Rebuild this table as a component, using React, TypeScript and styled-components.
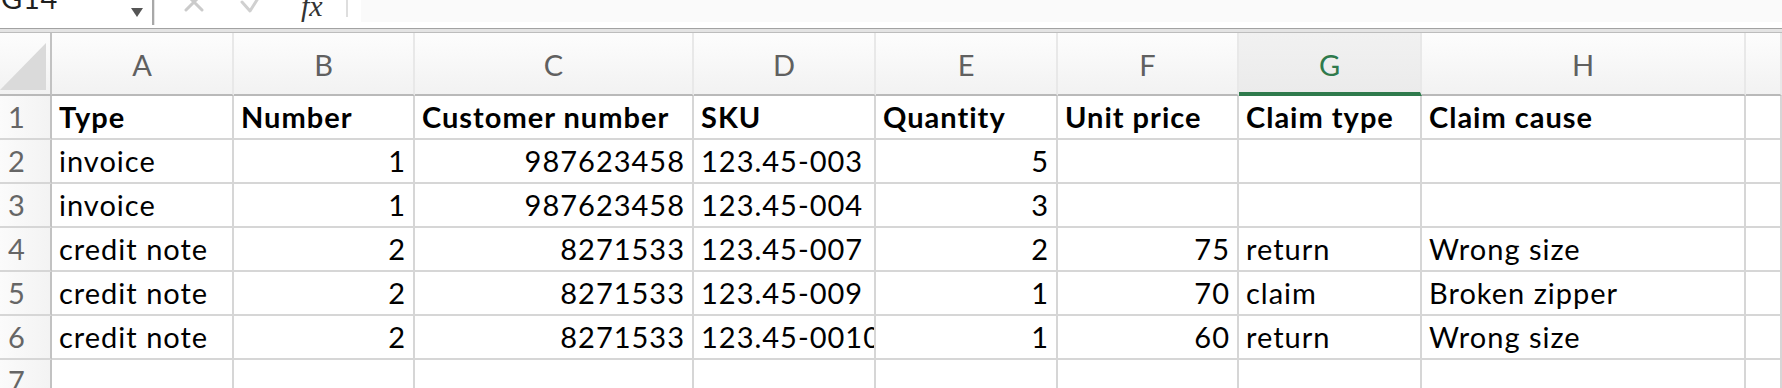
import React from 'react';
import styled, { createGlobalStyle, css } from 'styled-components';

const GlobalStyle = createGlobalStyle`
  html, body {
    margin: 0;
    padding: 0;
    background: #ffffff;
    overflow: hidden;
  }
  body {
    font-family: Lato, "Open Sans", sans-serif;
    font-size: 29px;
    color: #000;
  }
`;

type Cell = string | number | null;

const columns = [
  { key: 'A', width: 182 },
  { key: 'B', width: 181 },
  { key: 'C', width: 279 },
  { key: 'D', width: 182 },
  { key: 'E', width: 182 },
  { key: 'F', width: 181 },
  { key: 'G', width: 183 },
  { key: 'H', width: 324 },
];

const selectedColumn = 'G';

const titles = ['Type', 'Number', 'Customer number', 'SKU', 'Quantity', 'Unit price', 'Claim type', 'Claim cause'];

const rows: Cell[][] = [
  ['invoice', 1, 987623458, '123.45-003', 5, null, null, null],
  ['invoice', 1, 987623458, '123.45-004', 3, null, null, null],
  ['credit note', 2, 8271533, '123.45-007', 2, 75, 'return', 'Wrong size'],
  ['credit note', 2, 8271533, '123.45-009', 1, 70, 'claim', 'Broken zipper'],
  ['credit note', 2, 8271533, '123.45-0010', 1, 60, 'return', 'Wrong size'],
  [null, null, null, null, null, null, null, null],
];

const gridColumns = `52px ${columns.map((c) => `${c.width}px`).join(' ')} 1fr`;

const App: React.FC = () => {
  return (
    <>
      <GlobalStyle />
      <FormulaBar>
        <NameBox>
          <NameText>G14</NameText>
          <DropArrow />
        </NameBox>
        <BarDivider />
        <IconGroup>
          <svg width="22" height="22" viewBox="0 0 22 22" style={{ marginTop: -9 }}>
            <path d="M3 3 L19 19 M19 3 L3 19" stroke="#cbcbcb" strokeWidth="3" strokeLinecap="round" />
          </svg>
          <svg width="24" height="24" viewBox="0 0 24 24" style={{ marginTop: -11 }}>
            <path d="M2 13 L10 22 L22 3" stroke="#d0d0d0" strokeWidth="3" fill="none" strokeLinecap="round" strokeLinejoin="round" />
          </svg>
          <Fx>fx</Fx>
        </IconGroup>
        <FaintDivider />
        <FormulaInput />
      </FormulaBar>
      <SplitLine />
      <Sheet>
        <Corner>
          <svg width="50" height="61" viewBox="0 0 50 61">
            <polygon points="0,57 46,57 46,10" fill="#dadada" />
          </svg>
        </Corner>
        {columns.map((c) => (
          <ColumnHead key={c.key} $selected={c.key === selectedColumn}>
            {c.key}
          </ColumnHead>
        ))}
        <ColumnHead $selected={false} />

        <RowHead>1</RowHead>
        {titles.map((t) => (
          <DataCell key={t} $bold>
            <span>{t}</span>
          </DataCell>
        ))}
        <DataCell />

        {rows.map((row, r) => (
          <React.Fragment key={r}>
            <RowHead>{r + 2}</RowHead>
            {row.map((v, i) => (
              <DataCell key={i} $right={typeof v === 'number'}>
                {v !== null && <span>{v}</span>}
              </DataCell>
            ))}
            <DataCell />
          </React.Fragment>
        ))}
      </Sheet>
    </>
  );
};

export default App;

const FormulaBar = styled.div`
  display: flex;
  align-items: flex-start;
  height: 28px;
  overflow: hidden;
  background: #ffffff;
`;

const NameBox = styled.div`
  width: 152px;
  display: flex;
  justify-content: space-between;
  align-items: flex-start;
  padding-left: 1px;
  box-sizing: border-box;
`;

const NameText = styled.span`
  line-height: 1;
  margin-top: -17px;
  color: #1f1f1f;
  letter-spacing: 0.8px;
`;

const DropArrow = styled.span`
  width: 0;
  height: 0;
  margin: 8px 9px 0 0;
  border-left: 6.5px solid transparent;
  border-right: 6.5px solid transparent;
  border-top: 9px solid #555555;
`;

const BarDivider = styled.div`
  width: 2px;
  height: 25px;
  background: #a8a8a8;
  border-right: 1px solid #e6e6e6;
`;

const IconGroup = styled.div`
  display: flex;
  align-items: flex-start;
  gap: 35px;
  padding-left: 28px;
`;

const Fx = styled.span`
  font-family: "Liberation Serif", serif;
  font-style: italic;
  font-size: 30px;
  line-height: 1;
  margin: -9px 0 0 2px;
  color: #333333;
  width: 28px;
`;

const FaintDivider = styled.div`
  width: 2px;
  height: 17px;
  margin-left: 17px;
  background: #dedede;
`;

const FormulaInput = styled.div`
  flex: 1;
  height: 22px;
  margin-left: 13px;
  background: #fafafa;
`;

const SplitLine = styled.div`
  height: 3px;
  background: #e4e4e4;
  border-top: 1px solid #a2a2a2;
  border-bottom: 1px solid #bdbdbd;
`;

const Sheet = styled.div`
  display: grid;
  grid-template-columns: ${gridColumns};
  grid-template-rows: 63px;
  grid-auto-rows: 44px;
`;

const headText = css`
  display: flex;
  align-items: flex-end;
  line-height: 1;
  box-sizing: border-box;
  white-space: nowrap;
`;

const Corner = styled.div`
  background: linear-gradient(#fdfdfd, #f2f2f2);
  border-right: 2px solid #c2c2c2;
  border-bottom: 2px solid #b9b9b9;
  box-sizing: border-box;
  overflow: hidden;
`;

const ColumnHead = styled.div<{ $selected: boolean }>`
  ${headText}
  justify-content: center;
  padding-bottom: 15px;
  color: #606060;
  background: linear-gradient(#fdfdfd, #f2f2f2);
  border-right: 2px solid #e8e8e8;
  border-bottom: 2px solid #b9b9b9;
  ${({ $selected }) =>
    $selected &&
    css`
      color: #2f7a4c;
      background: linear-gradient(#f1f1f1, #ebebeb);
      border-bottom: 4px solid #2f7a4c;
      padding-bottom: 13px;
    `}
`;

const RowHead = styled.div`
  ${headText}
  padding: 0 0 7px 8px;
  color: #666666;
  background: linear-gradient(to right, #fbfbfb, #f3f3f3);
  border-right: 2px solid #c2c2c2;
  border-bottom: 2px solid #d6d6d6;
`;

const DataCell = styled.div<{ $right?: boolean; $bold?: boolean }>`
  ${headText}
  justify-content: ${({ $right }) => ($right ? 'flex-end' : 'flex-start')};
  padding: 0 7px 7px;
  overflow: hidden;
  letter-spacing: 1px;
  font-weight: ${({ $bold }) => ($bold ? 700 : 400)};
  border-right: 2px solid #d6d6d6;
  border-bottom: 2px solid #d6d6d6;
`;
